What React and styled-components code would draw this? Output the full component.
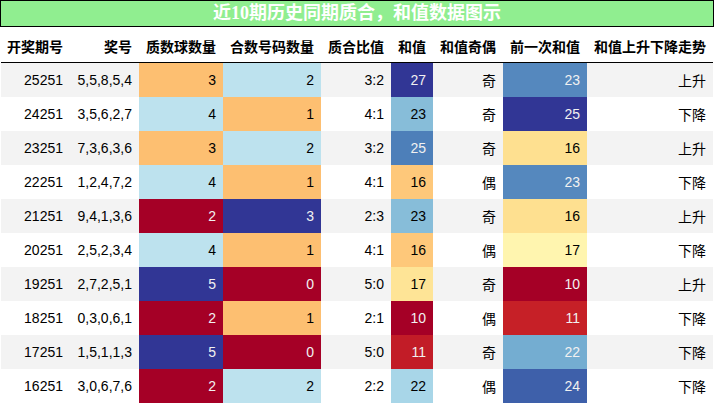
import React from "react";
import styled, { createGlobalStyle } from "styled-components";

const Global = createGlobalStyle`
  html, body { margin: 0; padding: 0; background: #fff; }
  body { font-family: "Liberation Sans", "Noto Sans CJK SC", sans-serif; }
`;

const COLS = "69px 69px 84px 98px 70px 42px 70px 84px 126px";

const Page = styled.div`
  width: 714px;
  height: 404px;
  overflow: hidden;
`;

const Title = styled.div`
  box-sizing: border-box;
  width: 714px;
  height: 27px;
  border: 1px solid #000;
  background: #90ee90;
  color: #fff;
  font-family: "Liberation Serif", "Noto Sans CJK SC", serif;
  font-weight: bold;
  font-size: 18px;
  line-height: 25px;
  text-align: center;
`;

const Table = styled.div`
  margin-left: 1px;
  width: 712px;
  display: grid;
  grid-template-columns: ${COLS};
`;

const HeadCell = styled.div`
  box-sizing: border-box;
  height: 36px;
  padding: 3px 7px 0;
  border-bottom: 1px solid #000;
  display: flex;
  align-items: center;
  justify-content: flex-end;
  font-weight: bold;
  font-size: 14px;
  color: #000;
  white-space: nowrap;
`;

const Cell = styled.div`
  height: 34px;
  display: flex;
  align-items: center;
  justify-content: flex-end;
  padding: 0 7px;
  font-size: 14px;
  white-space: nowrap;
  background: ${(p) => p.$bg};
  color: ${(p) => p.$fg};
`;

const RD = [
  [0.0, [165, 0, 38]],
  [0.1, [215, 48, 39]],
  [0.2, [244, 109, 67]],
  [0.3, [253, 174, 97]],
  [0.4, [254, 224, 144]],
  [0.5, [255, 255, 191]],
  [0.6, [224, 243, 248]],
  [0.7, [171, 217, 233]],
  [0.8, [116, 173, 209]],
  [0.9, [69, 117, 180]],
  [1.0, [49, 54, 149]],
];

function cmap(t) {
  const x = Math.max(0, Math.min(1, t));
  for (let i = 0; i < RD.length - 1; i++) {
    const [a, ca] = RD[i];
    const [b, cb] = RD[i + 1];
    if (x <= b + 1e-9) {
      const f = (x - a) / (b - a);
      return ca.map((v, k) => Math.round(v + (cb[k] - v) * f));
    }
  }
  return RD[RD.length - 1][1];
}

function lum(rgb) {
  const c = rgb.map((v) => {
    const s = v / 255;
    return s <= 0.03928 ? s / 12.92 : Math.pow((s + 0.055) / 1.055, 2.4);
  });
  return 0.2126 * c[0] + 0.7152 * c[1] + 0.0722 * c[2];
}

function grad(values) {
  const mn = Math.min(...values);
  const mx = Math.max(...values);
  return values.map((v) => {
    const rgb = cmap((v - mn) / (mx - mn));
    return {
      bg: `rgb(${rgb[0]},${rgb[1]},${rgb[2]})`,
      fg: lum(rgb) < 0.408 ? "#f1f1f1" : "#000",
    };
  });
}

const rows = [
  ["25251", "5,5,8,5,4", 3, 2, "3:2", 27, "奇", 23, "上升"],
  ["24251", "3,5,6,2,7", 4, 1, "4:1", 23, "奇", 25, "下降"],
  ["23251", "7,3,6,3,6", 3, 2, "3:2", 25, "奇", 16, "上升"],
  ["22251", "1,2,4,7,2", 4, 1, "4:1", 16, "偶", 23, "下降"],
  ["21251", "9,4,1,3,6", 2, 3, "2:3", 23, "奇", 16, "上升"],
  ["20251", "2,5,2,3,4", 4, 1, "4:1", 16, "偶", 17, "下降"],
  ["19251", "2,7,2,5,1", 5, 0, "5:0", 17, "奇", 10, "上升"],
  ["18251", "0,3,0,6,1", 2, 1, "2:1", 10, "偶", 11, "下降"],
  ["17251", "1,5,1,1,3", 5, 0, "5:0", 11, "奇", 22, "下降"],
  ["16251", "3,0,6,7,6", 2, 2, "2:2", 22, "偶", 24, "下降"],
];

const headers = [
  "开奖期号",
  "奖号",
  "质数球数量",
  "合数号码数量",
  "质合比值",
  "和值",
  "和值奇偶",
  "前一次和值",
  "和值上升下降走势",
];

const gradCols = [2, 3, 5, 7];
const grads = {};
gradCols.forEach((c) => {
  grads[c] = grad(rows.map((r) => r[c]));
});

export default function App() {
  return (
    <Page>
      <Global />
      <Title>近10期历史同期质合，和值数据图示</Title>
      <Table>
        {headers.map((h) => (
          <HeadCell key={h}>{h}</HeadCell>
        ))}
        {rows.map((r, ri) => {
          const rowBg = ri % 2 === 0 ? "#f3f3f3" : "#ffffff";
          return r.map((v, ci) => {
            const g = grads[ci] ? grads[ci][ri] : null;
            return (
              <Cell
                key={`${ri}-${ci}`}
                $bg={g ? g.bg : rowBg}
                $fg={g ? g.fg : "#000"}
              >
                {v}
              </Cell>
            );
          });
        })}
      </Table>
    </Page>
  );
}
